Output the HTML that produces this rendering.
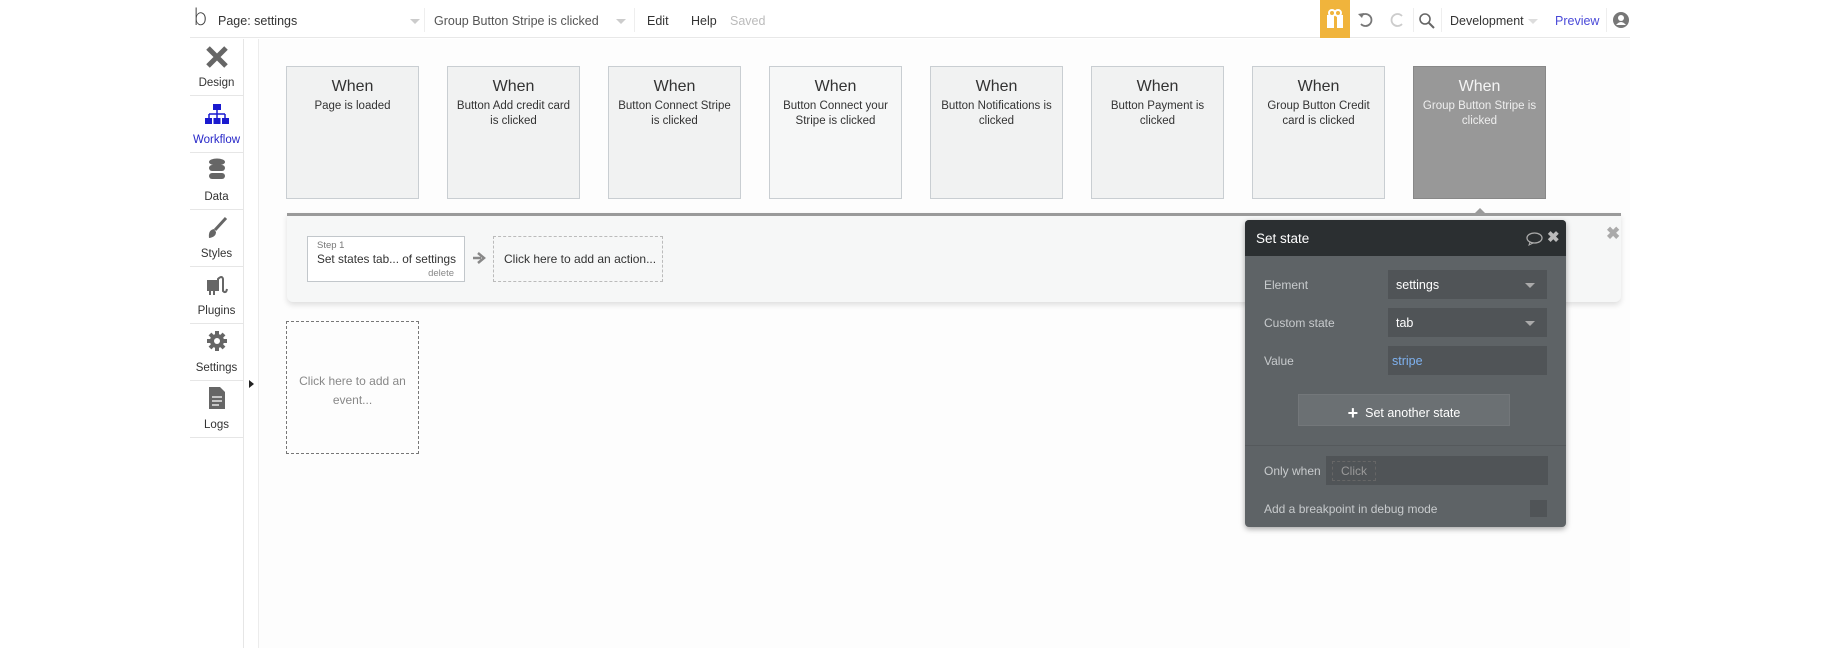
<!DOCTYPE html>
<html><head><meta charset="utf-8"><style>
*{box-sizing:border-box;margin:0;padding:0}
body{width:1830px;height:648px;background:#fff;font-family:"Liberation Sans",sans-serif;position:relative;overflow:hidden;color:#333}
.a{position:absolute}
.top{left:190px;top:0;width:1440px;height:38px;background:#fff;border-bottom:1px solid #e8e8e8}
.tt{font-size:12.5px;color:#333;top:14px}
.side{left:190px;top:39px;width:54px;height:609px;background:#fff;border-right:1px solid #e6e6e6}
.si{position:absolute;left:0;width:53px;height:57px;border-bottom:1px solid #e6e6e6;text-align:center;font-size:11.5px;color:#333}
.si span{position:absolute;left:0;right:0;bottom:6px}
.canvas{left:258px;top:39px;width:1372px;height:609px;background:#fdfdfd;border-left:1px solid #ececec}
.card{width:133px;height:133px;top:66px;background:#f1f2f2;border:1px solid #c9ced2;text-align:center;font-size:11.5px;line-height:15px;color:#333;white-space:nowrap}
.card b{display:block;font-weight:normal;font-size:16px;margin:12px 0 5px}
.lab{font-size:12px;color:#c8cbcd;left:1264px}
.fld{left:1388px;width:159px;height:29px;background:#505457;color:#fff;font-size:12.5px;padding:8px 0 0 8px}
.fld i{position:absolute;right:12px;top:13px;border:5px solid transparent;border-top-color:#aaa;border-bottom:0}
</style></head><body>
<div class="a top"></div>
<div class="a" style="left:193px;top:7px;font-size:23px;color:#444;line-height:22px;font-family:'DejaVu Sans',sans-serif;font-weight:300">b</div>
<div class="a tt" style="left:218px">Page: settings</div>
<div class="a" style="left:410px;top:19px;border:5px solid transparent;border-top-color:#ccc"></div>
<div class="a" style="left:424px;top:8px;width:1px;height:24px;background:#eee"></div>
<div class="a tt" style="left:434px;color:#555">Group Button Stripe is clicked</div>
<div class="a" style="left:616px;top:19px;border:5px solid transparent;border-top-color:#ccc"></div>
<div class="a" style="left:634px;top:8px;width:1px;height:24px;background:#eee"></div>
<div class="a tt" style="left:647px">Edit</div>
<div class="a tt" style="left:691px">Help</div>
<div class="a tt" style="left:730px;color:#bbb">Saved</div>
<div class="a" style="left:1320px;top:0;width:30px;height:38px;background:#f0b43c"></div>
<svg class="a" style="left:1324px;top:9px" width="22" height="20"><rect x="3" y="6" width="16" height="13" fill="#fff"/><rect x="10" y="6" width="3" height="13" fill="#f0b43c"/><circle cx="8" cy="4" r="3" fill="none" stroke="#fff" stroke-width="2"/><circle cx="14" cy="4" r="3" fill="none" stroke="#fff" stroke-width="2"/></svg>
<svg class="a" style="left:1357px;top:11px" width="18" height="18"><path d="M4 5 A6 6 0 1 1 4 13" fill="none" stroke="#777" stroke-width="1.8"/><path d="M1 3 L5 7 L7 2Z" fill="#777"/></svg>
<svg class="a" style="left:1388px;top:11px" width="18" height="18"><path d="M14 5 A6 6 0 1 0 14 13" fill="none" stroke="#ccc" stroke-width="1.8"/></svg>
<div class="a" style="left:1413px;top:8px;width:1px;height:24px;background:#eee"></div>
<svg class="a" style="left:1418px;top:12px" width="18" height="18"><circle cx="7" cy="7" r="5" fill="none" stroke="#666" stroke-width="1.6"/><path d="M11 11 L16 16" stroke="#666" stroke-width="2"/></svg>
<div class="a" style="left:1441px;top:8px;width:1px;height:24px;background:#eee"></div>
<div class="a tt" style="left:1450px">Development</div>
<div class="a" style="left:1528px;top:19px;border:5px solid transparent;border-top-color:#ddd"></div>
<div class="a tt" style="left:1555px;color:#4a4ad8">Preview</div>
<div class="a" style="left:1606px;top:8px;width:1px;height:24px;background:#eee"></div>
<svg class="a" style="left:1613px;top:12px" width="16" height="16"><circle cx="8" cy="8" r="8" fill="#777"/><circle cx="8" cy="6" r="3" fill="#fff"/><path d="M3 13 Q8 7 13 13" fill="#fff"/></svg>

<div class="a side">
<div class="si" style="top:0"><svg style="margin-top:6px" width="24" height="24"><path d="M3 3 L21 21 M21 3 L3 21" stroke="#666" stroke-width="5"/></svg><span>Design</span></div>
<div class="si" style="top:57px;color:#2828c8"><svg style="margin-top:8px" width="24" height="22"><rect x="8" y="0" width="8" height="6" fill="#1a1acf"/><path d="M12 6V10M4 10H20M4 10V14M12 10V14M20 10V14" stroke="#1a1acf" stroke-width="1.5" fill="none"/><rect x="0" y="14" width="7" height="6" fill="#1a1acf"/><rect x="8.5" y="14" width="7" height="6" fill="#1a1acf"/><rect x="17" y="14" width="7" height="6" fill="#1a1acf"/></svg><span>Workflow</span></div>
<div class="si" style="top:114px"><svg style="margin-top:5px" width="18" height="24"><ellipse cx="9" cy="4" rx="8" ry="3.5" fill="#666"/><rect x="1" y="7" width="16" height="6" rx="3" fill="#666"/><rect x="1" y="15" width="16" height="6" rx="3" fill="#666"/></svg><span>Data</span></div>
<div class="si" style="top:171px"><svg style="margin-top:6px" width="22" height="24"><path d="M20 2 L9 14" stroke="#666" stroke-width="3"/><path d="M8 13 Q2 14 3 22 Q10 21 10 16Z" fill="#666"/></svg><span>Styles</span></div>
<div class="si" style="top:228px"><svg style="margin-top:6px" width="24" height="24"><rect x="2" y="7" width="10" height="11" fill="#666"/><rect x="4" y="18" width="2" height="4" fill="#666"/><rect x="8" y="18" width="2" height="4" fill="#666"/><path d="M13 18 V6 Q17 2 18 6 V18 Q21 21 22 16" stroke="#666" stroke-width="2" fill="none"/></svg><span>Plugins</span></div>
<div class="si" style="top:285px"><svg style="margin-top:5px" width="24" height="24"><circle cx="12" cy="12" r="7" fill="#666"/><path d="M12 2V22M2 12H22M5 5L19 19M19 5L5 19" stroke="#666" stroke-width="4"/><circle cx="12" cy="12" r="3" fill="#fff"/></svg><span>Settings</span></div>
<div class="si" style="top:342px"><svg style="margin-top:6px" width="18" height="22"><path d="M1 0H12L17 5V22H1Z" fill="#666"/><path d="M4 10H14M4 14H14M4 18H11" stroke="#fff" stroke-width="1.3"/></svg><span>Logs</span></div>
</div>
<div class="a" style="left:249px;top:380px;border:4px solid transparent;border-left:5px solid #222"></div>

<div class="a canvas"></div>
<div class="a card" style="left:286px"><b>When</b>Page is loaded</div>
<div class="a card" style="left:447px"><b>When</b>Button Add credit card<br>is clicked</div>
<div class="a card" style="left:608px"><b>When</b>Button Connect Stripe<br>is clicked</div>
<div class="a card" style="left:769px;background:#f6f7f7"><b>When</b>Button Connect your<br>Stripe is clicked</div>
<div class="a card" style="left:930px"><b>When</b>Button Notifications is<br>clicked</div>
<div class="a card" style="left:1091px"><b>When</b>Button Payment is<br>clicked</div>
<div class="a card" style="left:1252px"><b>When</b>Group Button Credit<br>card is clicked</div>
<div class="a card" style="left:1413px;background:#989898;border-color:#888;color:#eee"><b style="color:#f4f4f4">When</b>Group Button Stripe is<br>clicked</div>

<div class="a" style="left:287px;top:213px;width:1334px;height:89px;background:#f6f7f7;border-top:3px solid #9a9a9a;box-shadow:0 3px 6px rgba(0,0,0,.12);border-radius:0 0 6px 6px"></div>
<div class="a" style="left:1606px;top:224px;font-size:17px;color:#aaa;font-weight:bold">✖</div>
<div class="a" style="left:307px;top:236px;width:158px;height:46px;border:1px solid #c2c7cb;background:#fff;font-size:12px;white-space:nowrap">
<div style="position:absolute;left:9px;top:3px;font-size:9.5px;color:#777">Step 1</div>
<div style="position:absolute;left:9px;top:15px;color:#333;font-size:11.8px">Set states tab... of settings</div>
<div style="position:absolute;right:10px;top:31px;font-size:9.5px;color:#888">delete</div></div>
<svg class="a" style="left:472px;top:251px" width="14" height="14"><path d="M1 7H9M6 2L12 7L6 12" stroke="#888" stroke-width="2.5" fill="none"/></svg>
<div class="a" style="left:493px;top:236px;width:170px;height:46px;border:1px dashed #bbb;font-size:12px;padding:15px 0 0 10px;white-space:nowrap">Click here to add an action...</div>
<div class="a" style="left:286px;top:321px;width:133px;height:133px;border:1px dashed #777;font-size:12px;color:#888;text-align:center;padding-top:50px;line-height:19px">Click here to add an<br>event...</div>

<div class="a" style="left:1474px;top:208px;border:6px solid transparent;border-bottom-color:#9a9a9a;border-top:0"></div>
<div class="a" style="left:1245px;top:220px;width:321px;height:307px;background:#5e6366;border-radius:4px;box-shadow:0 2px 6px rgba(0,0,0,.35);overflow:hidden">
<div style="height:36px;background:#2b2f31;color:#fff;font-size:13.5px;padding:11px 0 0 11px">Set state</div>
<svg style="position:absolute;left:281px;top:12px" width="17" height="14"><ellipse cx="8.5" cy="6" rx="7.5" ry="5" fill="none" stroke="#aaa" stroke-width="1.3"/><path d="M4 10 L3 13 L7 11" stroke="#aaa" fill="none"/></svg>
<div style="position:absolute;left:302px;top:8px;color:#bbb;font-size:15px;font-weight:bold">✖</div>
<div style="position:absolute;left:0;top:225px;width:321px;height:1px;background:#55595c"></div>
</div>
<div class="a lab" style="top:278px">Element</div>
<div class="a fld" style="top:270px">settings<i></i></div>
<div class="a lab" style="top:316px">Custom state</div>
<div class="a fld" style="top:308px">tab<i></i></div>
<div class="a lab" style="top:354px">Value</div>
<div class="a fld" style="top:346px;color:#7fb2f0;padding-left:4px">stripe</div>
<div class="a" style="left:1298px;top:394px;width:212px;height:32px;background:#6b7073;border:1px solid #73777a;color:#fff;font-size:12.5px;text-align:center;padding-top:8px"><span style="font-size:18px;font-weight:bold;vertical-align:-2px">+</span>&nbsp; Set another state</div>
<div class="a lab" style="top:464px">Only when</div>
<div class="a" style="left:1326px;top:456px;width:222px;height:29px;background:#505457"><span style="position:absolute;left:6px;top:5px;border:1px dashed #666;color:#999;font-size:12px;padding:2px 8px">Click</span></div>
<div class="a lab" style="top:502px">Add a breakpoint in debug mode</div>
<div class="a" style="left:1530px;top:500px;width:17px;height:17px;background:#505457"></div>
</body></html>
